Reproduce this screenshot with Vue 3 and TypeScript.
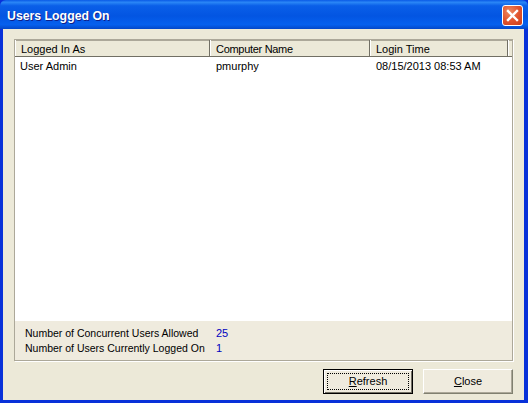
<script setup lang="ts">
const columns = [
  { label: 'Logged In As', width: 195 },
  { label: 'Computer Name', width: 160 },
  { label: 'Login Time', width: 138 },
]
const row = ['User Admin', 'pmurphy', '08/15/2013 08:53 AM']
</script>

<template>
  <div class="window">
    <div class="titlebar">
      <span class="title">Users Logged On</span>
      <button class="x" aria-label="Close">
        <svg width="13" height="13" viewBox="0 0 13 13">
          <path d="M2 2L11 11M11 2L2 11" stroke="#fff" stroke-width="2.4" stroke-linecap="square" fill="none" />
        </svg>
      </button>
    </div>
    <div class="body">
      <div class="panel">
        <div class="list">
          <div class="head">
            <div v-for="c in columns" :key="c.label" class="hcell" :style="{ width: c.width + 'px' }">{{ c.label }}</div>
            <div class="hrest"></div>
          </div>
          <div class="row">
            <div v-for="(v, i) in row" :key="v" class="cell" :style="{ width: columns[i].width + 'px' }">{{ v }}</div>
          </div>
        </div>
        <div class="stats">
          <div class="stat"><span class="lab">Number of Concurrent Users Allowed</span><span class="val">25</span></div>
          <div class="stat"><span class="lab">Number of Users Currently Logged On</span><span class="val">1</span></div>
        </div>
      </div>
      <div class="buttons">
        <button class="btn default"><span class="focus"><u>R</u>efresh</span></button>
        <button class="btn"><span class="focus plain"><u>C</u>lose</span></button>
      </div>
    </div>
  </div>
</template>

<style scoped>
.window {
  width: 528px;
  height: 403px;
  box-sizing: border-box;
  display: flex;
  flex-direction: column;
  background: #0831d9;
  font-family: "Liberation Sans", Arial, sans-serif;
  font-size: 11px;
  color: #000;
  overflow: hidden;
}
.titlebar {
  height: 29px;
  flex: none;
  display: flex;
  align-items: center;
  justify-content: space-between;
  padding: 1px 5px 0 7px;
  box-sizing: border-box;
  background: linear-gradient(180deg, #0a5ae6 0%, #2a86f6 8%, #0a5fe8 20%, #0355e2 55%, #0560ee 85%, #0347c8 100%);
  border-radius: 6px 6px 0 0;
}
.title {
  color: #fff;
  font-weight: 700;
  font-size: 12.3px;
  padding-top: 1px;
  text-shadow: 1px 1px 0 #0f1f8a;
}
.x {
  width: 21px;
  height: 21px;
  padding: 0;
  display: flex;
  align-items: center;
  justify-content: center;
  border: 1px solid #fff;
  border-radius: 3px;
  background: radial-gradient(circle at 35% 30%, #ee8a62 0%, #e2552f 50%, #c93c18 100%);
}
.body {
  flex: 1;
  margin: 0 4px 3px 3px;
  background: #ece9d8;
  padding: 10px 11px 0 11px;
  display: flex;
  flex-direction: column;
  min-height: 0;
}
.panel {
  height: 322px;
  flex: none;
  box-sizing: border-box;
  border: 1px solid #aca899;
  box-shadow: 1px 1px 0 #fff;
  display: flex;
  flex-direction: column;
}
.list {
  flex: 1;
  background: #fff;
  min-height: 0;
}
.head {
  display: flex;
  height: 17px;
  box-sizing: border-box;
  background: #ece9d8;
  border-bottom: 1px solid #716f64;
  box-shadow: inset 0 1px 0 #aca899;
}
.hcell {
  box-sizing: border-box;
  flex: none;
  padding: 2px 0 0 5px;
  line-height: 14px;
  white-space: nowrap;
  border-right: 1px solid #716f64;
  border-left: 1px solid #fff;
}
.hcell:nth-child(2) { letter-spacing: -0.3px; }
.hrest {
  flex: 1;
  border-left: 1px solid #fff;
}
.row {
  display: flex;
  height: 18px;
  align-items: center;
}
.cell {
  box-sizing: border-box;
  flex: none;
  padding-left: 5px;
  white-space: nowrap;
}
.cell:nth-child(n + 2) { padding-left: 6px; }
.stats {
  flex: none;
  height: 39px;
  box-sizing: border-box;
  padding: 5px 0 0 10px;
  background: #efebde;
}
.stat {
  display: flex;
  height: 15px;
  line-height: 15px;
  white-space: nowrap;
}
.lab { width: 191px; flex: none; font-size: 10.5px; }
.val { color: #0000c0; }
.buttons {
  display: flex;
  justify-content: flex-end;
  gap: 10px;
  padding: 8px 0 0;
}
.btn {
  width: 90px;
  height: 25px;
  padding: 0;
  box-sizing: border-box;
  font: inherit;
  color: #000;
  background: #efebde;
  border: 1px solid;
  border-color: #fff #808070 #808070 #fff;
  box-shadow: inset -1px -1px 0 #aca899;
  display: flex;
  align-items: center;
  justify-content: center;
}
.btn.default {
  border: 1px solid #000;
  box-shadow: inset 1px 1px 0 #fff, inset -1px -1px 0 #716f64;
}
.focus {
  box-sizing: border-box;
  width: 82px;
  height: 17px;
  line-height: 15px;
  text-align: center;
  border: 1px dotted #000;
}
.focus.plain { border-color: transparent; }
</style>
